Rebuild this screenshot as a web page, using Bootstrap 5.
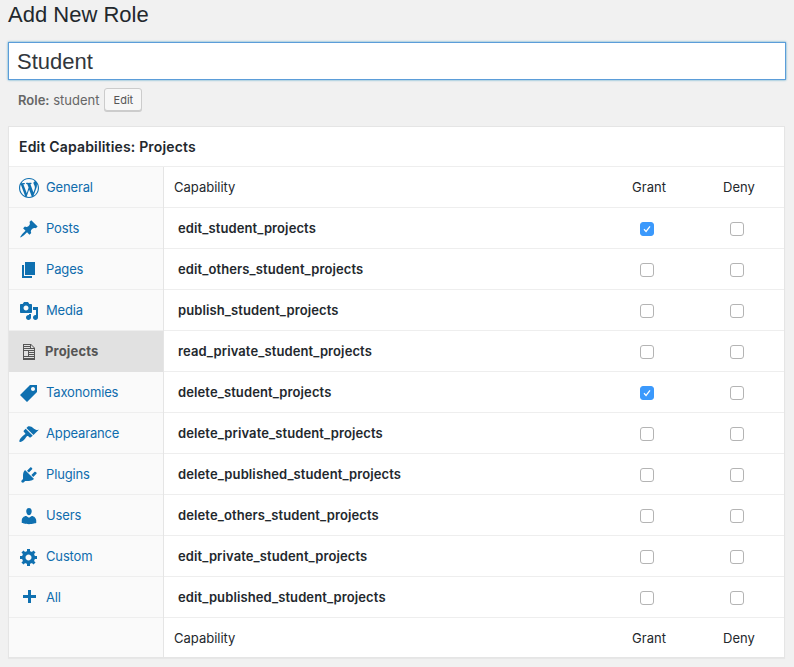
<!DOCTYPE html>
<html lang="en">
<head>
<meta charset="utf-8">
<title>Add New Role</title>
<link rel="stylesheet" href="https://cdn.jsdelivr.net/npm/bootstrap@5.3.0/dist/css/bootstrap.min.css">
<style>
body{background:#f1f1f1;font-family:Inter,"Liberation Sans",sans-serif;font-size:13px;color:#23282d;margin:0;padding:0 8px;height:667px;overflow:hidden}
.page-title{font-family:"Liberation Sans",Arial,sans-serif;font-size:22px;font-weight:400;line-height:29px;margin:0;height:42px;color:#23282d}
.role-name{display:block;width:100%;height:38px;font-family:"Liberation Sans",Arial,sans-serif;font-size:22px;line-height:36px;padding:1px 8px 0;border:1px solid #5b9dd9;box-shadow:0 0 2px rgba(30,140,190,.8);color:#32373c;background:#fff;border-radius:0;outline:0}
.slug-row{height:46px;padding:0 10px 4px;color:#666}
.slug-row b{font-weight:600}
.slug-btn{font-size:11px;line-height:20px;height:23px;width:38px;padding:0;border:1px solid #ccc;border-radius:3px;background:#f7f7f7;box-shadow:0 1px 0 #ccc;color:#555;margin:0 0 3px 5px}
.cap-box{background:#fff;border:1px solid #e5e5e5;box-shadow:0 1px 1px rgba(0,0,0,.04);height:532px;margin-right:1px}
.cap-head{height:40px;border-bottom:1px solid #eee;padding:0 10px;font-size:14px;font-weight:600;letter-spacing:.17px;line-height:39px;color:#23282d}
.side{width:155px;flex:none;background:#fafafa;border-right:1px solid #e5e5e5}
.side-link{display:flex;align-items:center;height:41px;border-bottom:1px solid #eee;padding:1px 0 0 10px;color:#0f6cad;letter-spacing:-.15px;text-decoration:none}
.side-link svg{width:20px;height:20px;margin-right:7px;fill:#0f70b0;flex:none}
.side-link.on{background:#e1e1e1;color:#555;font-weight:700;letter-spacing:.15px;border-bottom-color:#e1e1e1}
.side-link.on svg{fill:#555;margin-right:6px}
.cap-table{width:100%;border-collapse:separate;border-spacing:0;table-layout:fixed}
.cap-table th,.cap-table td{height:41px;padding:1px 0 0;border-bottom:1px solid #eee;vertical-align:middle;font-weight:400}
.cap-table tfoot th{height:39px;border-bottom:0;padding-top:2px}
.c-name{padding-left:10px!important}
.cap-table td.c-name{padding-left:14px!important;font-weight:600;letter-spacing:.11px;color:#23282d}
.c-g{width:90px;text-align:center}
.c-d{width:90px;text-align:center}
.tick{-webkit-appearance:none;appearance:none;display:inline-block;vertical-align:middle;width:14px;height:14px;margin:0 4px 0 0;border:1px solid #b4b4b4;border-radius:3px;background:#fff}
.tick:checked{background:#3b99fc url("data:image/svg+xml,%3Csvg xmlns='http://www.w3.org/2000/svg' viewBox='0 0 14 14'%3E%3Cpath d='M3.5 7.3l2.4 2.6 4.6-6' fill='none' stroke='%23fff' stroke-width='1.4'/%3E%3C/svg%3E") center/100% no-repeat;border-color:#3b99fc}
</style>
</head>
<body>
<h1 class="page-title">Add New Role</h1>
<input class="role-name" type="text" value="Student" aria-label="Role name">
<div class="slug-row d-flex align-items-center"><span><b>Role:</b> student</span><button class="slug-btn" type="button">Edit</button></div>
<div class="cap-box">
  <div class="cap-head">Edit Capabilities: Projects</div>
  <div class="d-flex">
    <nav class="side">
      <a class="side-link" href="#"><svg viewBox="0 0 20 20"><path d="M20 10c0-5.51-4.49-10-10-10C4.48 0 0 4.49 0 10c0 5.52 4.48 10 10 10 5.51 0 10-4.48 10-10zM7.78 15.37L4.37 6.22c.55-.02 1.17-.08 1.17-.08.5-.06.44-1.13-.06-1.11 0 0-1.45.11-2.37.11-.18 0-.37 0-.58-.01C4.12 2.69 6.87 1.11 10 1.11c2.33 0 4.45.87 6.05 2.34-.68-.11-1.65.39-1.65 1.58 0 .74.45 1.36.9 2.1.35.61.55 1.36.55 2.46 0 1.49-1.4 5-1.4 5l-3.03-8.37c.54-.02.82-.17.82-.17.5-.05.44-1.25-.06-1.22 0 0-1.44.12-2.38.12-.87 0-2.33-.12-2.33-.12-.5-.03-.56 1.2-.06 1.22l.92.08 1.26 3.41zM17.41 10c.24-.64.74-1.87.43-4.25.7 1.29 1.05 2.71 1.05 4.25 0 3.29-1.73 6.24-4.4 7.78.97-2.59 1.94-5.2 2.92-7.78zM6.1 18.09C3.12 16.65 1.11 13.53 1.11 10c0-1.3.23-2.48.72-3.59C3.25 10.3 4.67 14.2 6.1 18.09zm4.03-6.63l2.58 6.98c-.86.29-1.76.45-2.71.45-.79 0-1.57-.11-2.29-.33.81-2.38 1.62-4.74 2.42-7.1z"/></svg>General</a>
      <a class="side-link" href="#"><svg viewBox="0 0 20 20"><path d="M10.44 3.02l1.82-1.82 6.36 6.35-1.83 1.82c-1.05-.68-2.48-.57-3.41.36l-.75.75c-.92.93-1.04 2.35-.35 3.41l-1.83 1.82-2.41-2.41-2.8 2.79c-.42.42-3.38 2.71-3.8 2.29s1.86-3.39 2.28-3.81l2.79-2.79L4.1 9.36l1.83-1.82c1.05.69 2.48.57 3.4-.36l.75-.75c.93-.92 1.05-2.35.36-3.41z"/></svg>Posts</a>
      <a class="side-link" href="#"><svg viewBox="0 0 20 20"><path d="M6 15V2h10v13H6zm-1 1h8v2H3V5h2v11z"/></svg>Pages</a>
      <a class="side-link" href="#"><svg viewBox="0 0 20 20"><path d="M13 11V4c0-.55-.45-1-1-1h-1.67L9 1H5L3.67 3H2c-.55 0-1 .45-1 1v7c0 .55.45 1 1 1h10c.55 0 1-.45 1-1zM7 4.5c1.38 0 2.5 1.12 2.5 2.5S8.38 9.5 7 9.5 4.5 8.38 4.5 7 5.62 4.5 7 4.5zM14 6h5v10.5c0 1.38-1.12 2.5-2.5 2.5S14 17.88 14 16.5s1.12-2.5 2.5-2.5c.17 0 .34.02.5.05V9h-3V6zm-4 8.05V13h2v3.5c0 1.38-1.12 2.5-2.5 2.5S7 17.88 7 16.5 8.12 14 9.5 14c.17 0 .34.02.5.05z"/></svg>Media</a>
      <a class="side-link on" href="#"><svg viewBox="0 0 20 20"><path fill-rule="evenodd" d="M12 2l4 4v12H4V2h8zM5 3v1h6V3H5zm0 2v1h6V5H5zm7-2v3h3l-3-3zM5 7v1h10V7H5zm0 2v5h4V9H5zm5 0v1h5V9h-5zm0 2v1h5v-1h-5zm0 2v1h5v-1h-5zm-5 2v1h10v-1H5z"/></svg>Projects</a>
      <a class="side-link" href="#"><svg viewBox="0 0 20 20"><path d="M11 2h7v7L8 19l-7-7zm3 6c1.1 0 2-.9 2-2s-.9-2-2-2-2 .9-2 2 .9 2 2 2z"/></svg>Taxonomies</a>
      <a class="side-link" href="#"><svg viewBox="0 0 20 20"><path d="M14.48 11.06L7.41 3.99l1.5-1.5c.5-.56 2.3-.47 3.51.32 1.21.8 1.43 1.28 2.91 2.1 1.18.64 2.45 1.26 4.45.85zm-.71.71L6.7 4.7 4.93 6.47c-.39.39-.39 1.02 0 1.41l1.06 1.06c.39.39.39 1.03 0 1.42-.6.6-1.43 1.11-2.21 1.69-.35.26-.7.53-1.01.84-1.58 1.57-3.04 3.95-2.2 4.79.85.85 3.22-.62 4.79-2.2.3-.3.58-.66.84-1.01.58-.78 1.09-1.61 1.69-2.21.39-.39 1.03-.39 1.42 0l1.06 1.06c.39.39 1.02.39 1.41 0z"/></svg>Appearance</a>
      <a class="side-link" href="#"><svg viewBox="0 0 20 20"><path d="M13.11 4.36L9.87 7.6 8 5.73l3.24-3.24c.35-.34 1.05-.2 1.56.32.52.51.66 1.21.31 1.55zm-8 1.77l.91-1.12 9.01 9.01-1.19.84c-.71.71-2.63 1.16-3.82 1.16H6.14L4.9 17.26c-.59.59-1.54.59-2.12 0-.59-.58-.59-1.53 0-2.12l1.24-1.24v-3.88c0-1.13.4-3.19 1.09-3.89zm7.26 3.97l3.24-3.24c.34-.35 1.04-.21 1.55.31.52.51.66 1.21.31 1.55l-3.24 3.25z"/></svg>Plugins</a>
      <a class="side-link" href="#"><svg viewBox="0 0 20 20"><path d="M10 9.25c-2.27 0-2.73-3.44-2.73-3.44C7 4.02 7.82 2 9.97 2c2.16 0 2.98 2.02 2.71 3.81 0 0-.41 3.44-2.68 3.44zm0 2.57L12.72 10c2.39 0 4.52 2.33 4.52 4.53v2.49s-3.65 1.13-7.24 1.13c-3.65 0-7.24-1.13-7.24-1.13v-2.49c0-2.25 1.94-4.48 4.47-4.48z"/></svg>Users</a>
      <a class="side-link" href="#"><svg viewBox="0 0 20 20"><path d="M18 12h-2.18c-.17.7-.44 1.35-.81 1.93l1.54 1.54-2.1 2.1-1.54-1.54c-.58.36-1.23.63-1.91.79V19H8v-2.18c-.68-.16-1.33-.43-1.91-.79l-1.54 1.54-2.12-2.12 1.54-1.54c-.36-.58-.63-1.23-.79-1.91H1V9.03h2.17c.16-.7.44-1.35.8-1.94L2.43 5.55l2.1-2.1 1.54 1.54c.58-.37 1.24-.64 1.93-.81V2h3v2.18c.68.16 1.33.43 1.91.79l1.54-1.54 2.12 2.12-1.54 1.54c.36.59.64 1.24.8 1.94H18V12zm-8.5 1.5c1.66 0 3-1.34 3-3s-1.34-3-3-3-3 1.34-3 3 1.34 3 3 3z"/></svg>Custom</a>
      <a class="side-link" href="#"><svg viewBox="0 0 20 20"><path d="M17 7v3h-5v5H9v-5H4V7h5V2h3v5h5z"/></svg>All</a>
    </nav>
    <div class="flex-grow-1">
      <table class="cap-table">
        <thead><tr><th class="c-name">Capability</th><th class="c-g">Grant</th><th class="c-d">Deny</th></tr></thead>
        <tbody>
          <tr><td class="c-name">edit_student_projects</td><td class="c-g"><input class="tick" type="checkbox" checked></td><td class="c-d"><input class="tick" type="checkbox"></td></tr>
          <tr><td class="c-name">edit_others_student_projects</td><td class="c-g"><input class="tick" type="checkbox"></td><td class="c-d"><input class="tick" type="checkbox"></td></tr>
          <tr><td class="c-name">publish_student_projects</td><td class="c-g"><input class="tick" type="checkbox"></td><td class="c-d"><input class="tick" type="checkbox"></td></tr>
          <tr><td class="c-name">read_private_student_projects</td><td class="c-g"><input class="tick" type="checkbox"></td><td class="c-d"><input class="tick" type="checkbox"></td></tr>
          <tr><td class="c-name">delete_student_projects</td><td class="c-g"><input class="tick" type="checkbox" checked></td><td class="c-d"><input class="tick" type="checkbox"></td></tr>
          <tr><td class="c-name">delete_private_student_projects</td><td class="c-g"><input class="tick" type="checkbox"></td><td class="c-d"><input class="tick" type="checkbox"></td></tr>
          <tr><td class="c-name">delete_published_student_projects</td><td class="c-g"><input class="tick" type="checkbox"></td><td class="c-d"><input class="tick" type="checkbox"></td></tr>
          <tr><td class="c-name">delete_others_student_projects</td><td class="c-g"><input class="tick" type="checkbox"></td><td class="c-d"><input class="tick" type="checkbox"></td></tr>
          <tr><td class="c-name">edit_private_student_projects</td><td class="c-g"><input class="tick" type="checkbox"></td><td class="c-d"><input class="tick" type="checkbox"></td></tr>
          <tr><td class="c-name">edit_published_student_projects</td><td class="c-g"><input class="tick" type="checkbox"></td><td class="c-d"><input class="tick" type="checkbox"></td></tr>
        </tbody>
        <tfoot><tr><th class="c-name">Capability</th><th class="c-g">Grant</th><th class="c-d">Deny</th></tr></tfoot>
      </table>
    </div>
  </div>
</div>
<script src="https://cdn.jsdelivr.net/npm/bootstrap@5.3.0/dist/js/bootstrap.bundle.min.js"></script>
</body>
</html>
